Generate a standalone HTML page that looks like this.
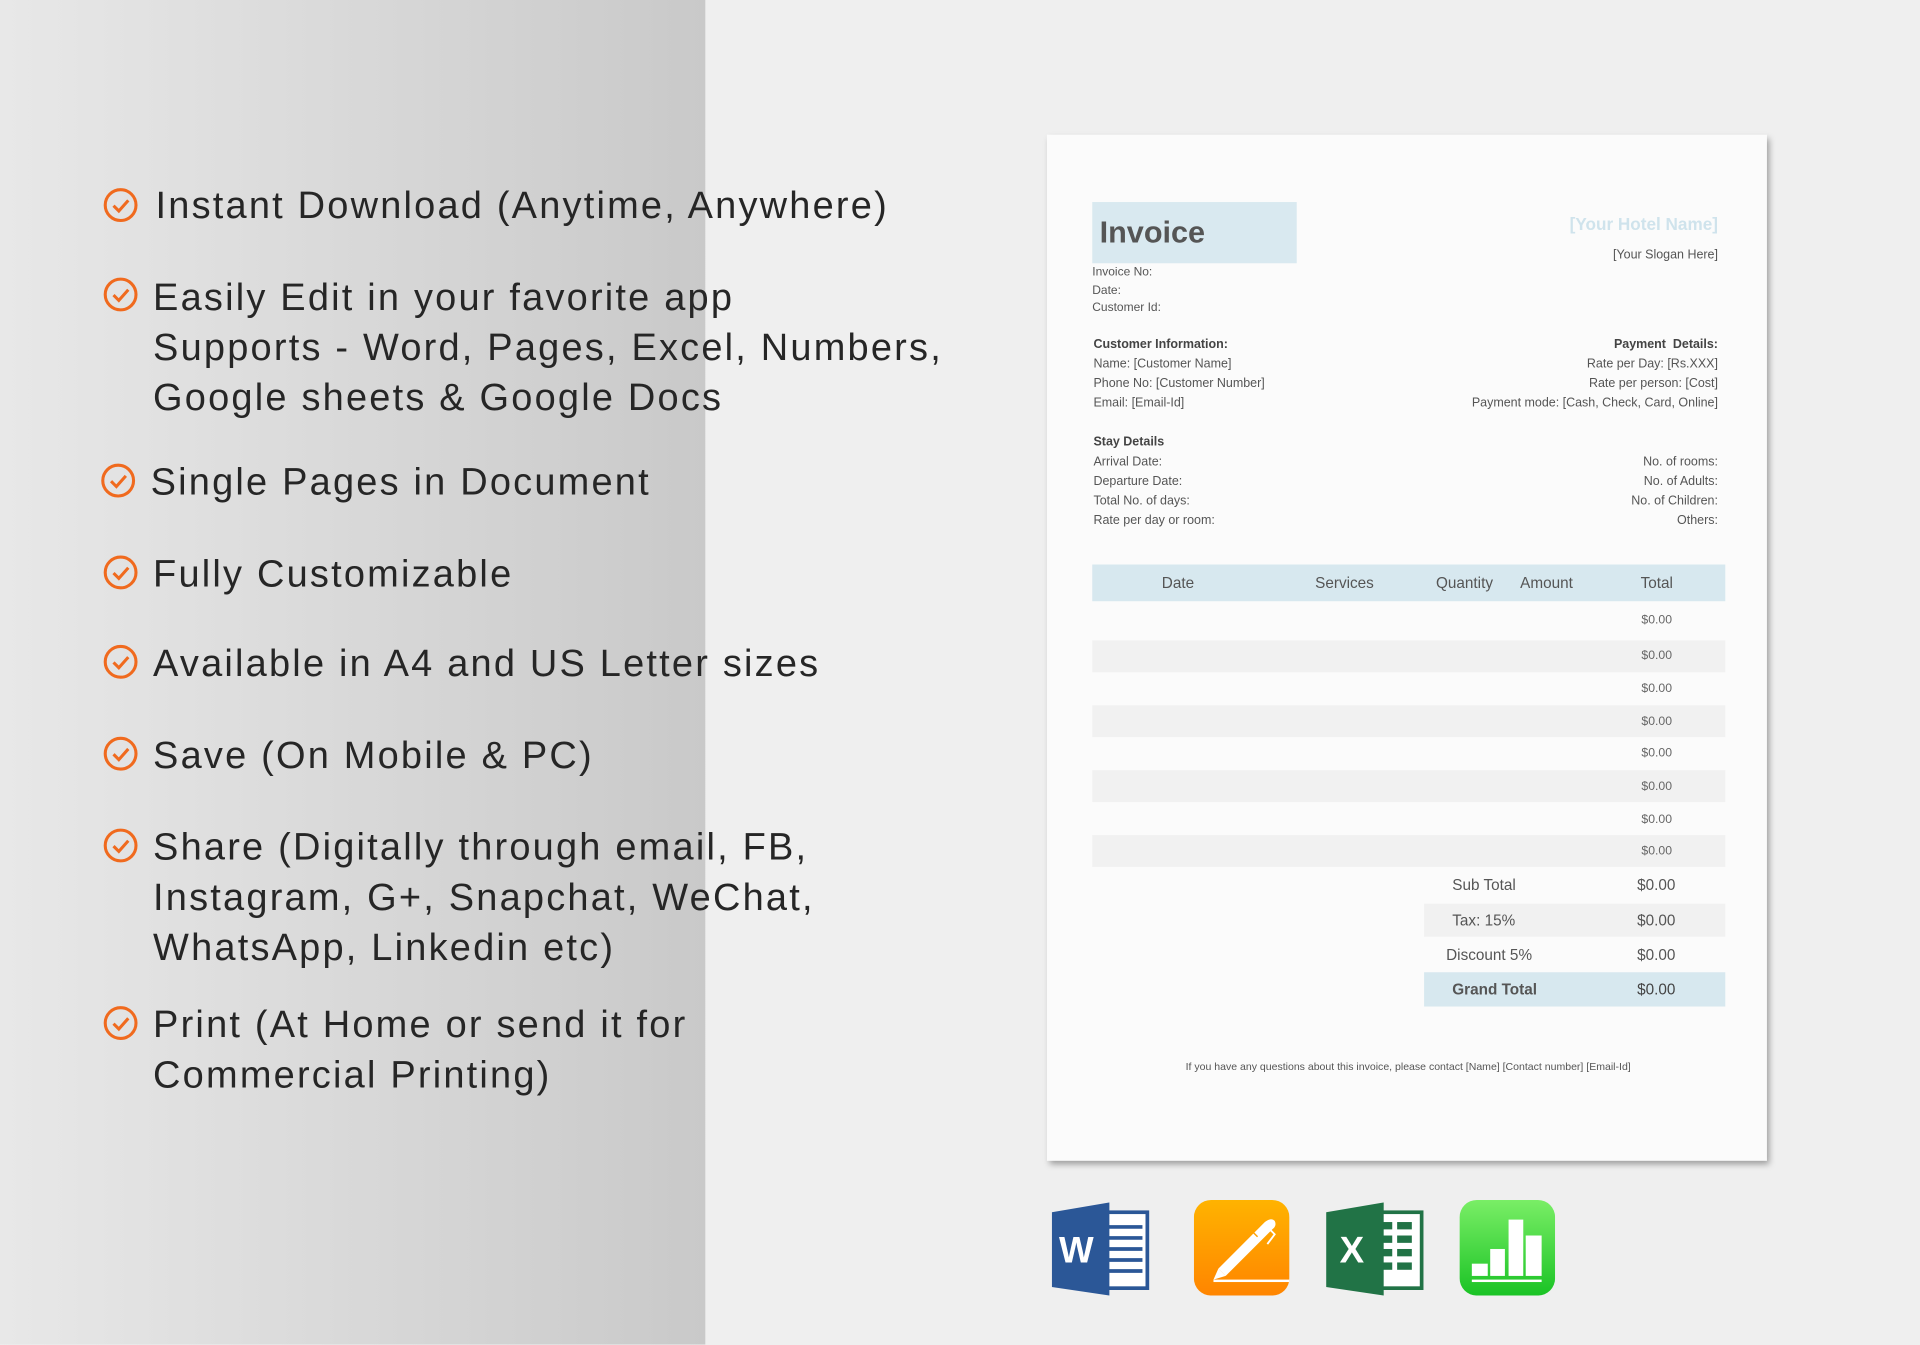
<!DOCTYPE html>
<html><head><meta charset="utf-8"><style>
*{margin:0;padding:0;box-sizing:border-box}
html,body{width:1920px;height:1344px;overflow:hidden;background:#efefef}
#w{position:absolute;left:0;top:0;width:1568px;height:1098px;transform:scale(1.22449);transform-origin:0 0;font-family:"Liberation Sans",sans-serif}
.left{position:absolute;left:0;top:0;width:576px;height:1098px;background:linear-gradient(90deg,#e8e8e8,#c9c9c9)}
.b{position:absolute;left:125px;font-size:31px;color:#262626;letter-spacing:1.8px;line-height:41px;white-space:nowrap}
.ck{position:absolute;left:84px;width:29px;height:29px}
.doc{position:absolute;left:855px;top:110px;width:588px;height:838px;background:#fbfbfb;box-shadow:2px 3px 5px rgba(0,0,0,.35)}
.t{position:absolute;font-size:10.2px;color:#555;line-height:14px;white-space:nowrap}
.r{text-align:right}
.bd{font-weight:bold;color:#444}
.c{position:absolute;font-size:12.5px;color:#555;line-height:14px;transform:translateX(-50%);white-space:nowrap}
.v{position:absolute;font-size:10px;color:#666;left:1353px;transform:translateX(-50%);line-height:12px}
.s{position:absolute;font-size:12.5px;color:#555;line-height:14px;white-space:nowrap}
</style></head><body><div id="w">
<div class="left"></div>

<svg class="ck" style="top:153px" viewBox="0 0 30 30"><circle cx="15" cy="15" r="13" fill="none" stroke="#f06a1e" stroke-width="2.6"/><path d="M9 15.5l4.5 4.5 8-9" fill="none" stroke="#f06a1e" stroke-width="2.6"/></svg>
<div class="b" style="top:147px;left:127px">Instant Download (Anytime, Anywhere)</div>
<svg class="ck" style="top:226px" viewBox="0 0 30 30"><circle cx="15" cy="15" r="13" fill="none" stroke="#f06a1e" stroke-width="2.6"/><path d="M9 15.5l4.5 4.5 8-9" fill="none" stroke="#f06a1e" stroke-width="2.6"/></svg>
<div class="b" style="top:222px">Easily Edit in your favorite app<br>Supports - Word, Pages, Excel, Numbers,<br>Google sheets &amp; Google Docs</div>
<svg class="ck" style="top:378px;left:82px" viewBox="0 0 30 30"><circle cx="15" cy="15" r="13" fill="none" stroke="#f06a1e" stroke-width="2.6"/><path d="M9 15.5l4.5 4.5 8-9" fill="none" stroke="#f06a1e" stroke-width="2.6"/></svg>
<div class="b" style="top:373px;left:123px">Single Pages in Document</div>
<svg class="ck" style="top:453px" viewBox="0 0 30 30"><circle cx="15" cy="15" r="13" fill="none" stroke="#f06a1e" stroke-width="2.6"/><path d="M9 15.5l4.5 4.5 8-9" fill="none" stroke="#f06a1e" stroke-width="2.6"/></svg>
<div class="b" style="top:448px">Fully Customizable</div>
<svg class="ck" style="top:526px" viewBox="0 0 30 30"><circle cx="15" cy="15" r="13" fill="none" stroke="#f06a1e" stroke-width="2.6"/><path d="M9 15.5l4.5 4.5 8-9" fill="none" stroke="#f06a1e" stroke-width="2.6"/></svg>
<div class="b" style="top:521px">Available in A4 and US Letter sizes</div>
<svg class="ck" style="top:601px" viewBox="0 0 30 30"><circle cx="15" cy="15" r="13" fill="none" stroke="#f06a1e" stroke-width="2.6"/><path d="M9 15.5l4.5 4.5 8-9" fill="none" stroke="#f06a1e" stroke-width="2.6"/></svg>
<div class="b" style="top:596px">Save (On Mobile &amp; PC)</div>
<svg class="ck" style="top:676px" viewBox="0 0 30 30"><circle cx="15" cy="15" r="13" fill="none" stroke="#f06a1e" stroke-width="2.6"/><path d="M9 15.5l4.5 4.5 8-9" fill="none" stroke="#f06a1e" stroke-width="2.6"/></svg>
<div class="b" style="top:671px">Share (Digitally through email, FB,<br>Instagram, G+, Snapchat, WeChat,<br>WhatsApp, Linkedin etc)</div>
<svg class="ck" style="top:821px" viewBox="0 0 30 30"><circle cx="15" cy="15" r="13" fill="none" stroke="#f06a1e" stroke-width="2.6"/><path d="M9 15.5l4.5 4.5 8-9" fill="none" stroke="#f06a1e" stroke-width="2.6"/></svg>
<div class="b" style="top:816px">Print (At Home or send it for<br>Commercial Printing)</div>

<div class="doc"></div>
<div style="position:absolute;left:892px;top:165px;width:167px;height:50px;background:#d9e9f0"></div>
<div style="position:absolute;left:898px;top:176px;font-size:25px;font-weight:bold;color:#555">Invoice</div>
<div style="position:absolute;right:165px;top:175px;font-size:14px;font-weight:bold;color:#cfe3ec">[Your Hotel Name]</div>
<div class="t r" style="right:165px;top:202px">[Your Slogan Here]</div>
<div class="t" style="left:892px;top:216px;line-height:14.5px;font-size:9.8px">Invoice No:<br>Date:<br>Customer Id:</div>
<div class="t" style="left:893px;top:274px;line-height:16px"><span class="bd">Customer Information:</span><br>Name: [Customer Name]<br>Phone No: [Customer Number]<br>Email: [Email-Id]</div>
<div class="t r" style="right:165px;top:274px;line-height:16px"><span class="bd">Payment&nbsp; Details:</span><br>Rate per Day: [Rs.XXX]<br>Rate per person: [Cost]<br>Payment mode: [Cash, Check, Card, Online]</div>
<div class="t" style="left:893px;top:354px;line-height:16px"><span class="bd">Stay Details</span><br>Arrival Date:<br>Departure Date:<br>Total No. of days:<br>Rate per day or room:</div>
<div class="t r" style="right:165px;top:370px;line-height:16px">No. of rooms:<br>No. of Adults:<br>No. of Children:<br>Others:</div>

<div style="position:absolute;left:892px;top:461px;width:517px;height:30px;background:#d7e8ef"></div>
<div class="c" style="left:962px;top:469px">Date</div>
<div class="c" style="left:1098px;top:469px">Services</div>
<div class="c" style="left:1196px;top:469px">Quantity</div>
<div class="c" style="left:1263px;top:469px">Amount</div>
<div class="c" style="left:1353px;top:469px">Total</div>
<div style="position:absolute;left:892px;top:523px;width:517px;height:26px;background:#f1f1f1"></div>
<div style="position:absolute;left:892px;top:576px;width:517px;height:26px;background:#f1f1f1"></div>
<div style="position:absolute;left:892px;top:629px;width:517px;height:26px;background:#f1f1f1"></div>
<div style="position:absolute;left:892px;top:682px;width:517px;height:26px;background:#f1f1f1"></div>
<div class="v" style="top:501px">$0.00</div>
<div class="v" style="top:530px">$0.00</div>
<div class="v" style="top:557px">$0.00</div>
<div class="v" style="top:584px">$0.00</div>
<div class="v" style="top:610px">$0.00</div>
<div class="v" style="top:637px">$0.00</div>
<div class="v" style="top:664px">$0.00</div>
<div class="v" style="top:690px">$0.00</div>
<div style="position:absolute;left:1163px;top:738px;width:246px;height:27px;background:#f1f1f1"></div>
<div style="position:absolute;left:1163px;top:794px;width:246px;height:28px;background:#d7e8ef"></div>
<div class="s" style="left:1186px;top:716px">Sub Total</div>
<div class="s" style="left:1186px;top:745px">Tax: 15%</div>
<div class="s" style="left:1181px;top:773px">Discount 5%</div>
<div class="s bd" style="left:1186px;top:801px;color:#555">Grand Total</div>
<div class="s" style="left:1337px;top:716px">$0.00</div>
<div class="s" style="left:1337px;top:745px">$0.00</div>
<div class="s" style="left:1337px;top:773px">$0.00</div>
<div class="s" style="left:1337px;top:801px;color:#444">$0.00</div>
<div class="t" style="left:1150px;top:864px;font-size:8.6px;transform:translateX(-50%)">If you have any questions about this invoice, please contact [Name] [Contact number] [Email-Id]</div>

<svg style="position:absolute;left:859px;top:982px" width="80" height="76" viewBox="0 0 80 76">
<rect x="28" y="8" width="50" height="62" fill="#fff" stroke="#2b5797" stroke-width="3"/>
<g stroke="#2b5797" stroke-width="3"><path d="M40 20h34M40 29h34M40 38h34M40 47h34M40 56h34"/></g>
<path d="M0 8L47 0V76L0 69Z" fill="#2b5797"/>
<text x="20" y="49" font-family="Liberation Sans" font-weight="bold" font-size="30" fill="#fff" text-anchor="middle">W</text></svg>
<svg style="position:absolute;left:975px;top:980px" width="78" height="78" viewBox="0 0 78 78">
<defs><linearGradient id="g1" x1="0" y1="0" x2="0" y2="1"><stop offset="0" stop-color="#ffb300"/><stop offset="1" stop-color="#ff8500"/></linearGradient>
<linearGradient id="g2" x1="0" y1="0" x2="0" y2="1"><stop offset="0" stop-color="#7aee66"/><stop offset="1" stop-color="#1ac325"/></linearGradient></defs>
<rect width="78" height="78" rx="14" fill="url(#g1)"/>
<path d="M20 56L58 18Q63 14 66 17Q68 21 64 24L26 62Z" fill="#fff"/>
<path d="M20 56L26 62L16 65Z" fill="#fff"/>
<path d="M52 30L48 26" stroke="#ffa000" stroke-width="1.2"/>
<path d="M60 22L66 28L60 36" stroke="#fff" stroke-width="1.5" fill="none"/>
<rect x="16" y="65" width="62" height="2" fill="#fff"/></svg>
<svg style="position:absolute;left:1083px;top:982px" width="80" height="76" viewBox="0 0 80 76">
<rect x="28" y="8" width="50" height="62" fill="#fff" stroke="#217346" stroke-width="3"/>
<g fill="#217346"><rect x="42" y="16" width="12" height="6"/><rect x="58" y="16" width="12" height="6"/><rect x="42" y="27" width="12" height="6"/><rect x="58" y="27" width="12" height="6"/><rect x="42" y="38" width="12" height="6"/><rect x="58" y="38" width="12" height="6"/><rect x="42" y="49" width="12" height="6"/><rect x="58" y="49" width="12" height="6"/></g>
<path d="M0 8L47 0V76L0 69Z" fill="#217346"/>
<text x="21" y="49" font-family="Liberation Sans" font-weight="bold" font-size="30" fill="#fff" text-anchor="middle">X</text></svg>
<svg style="position:absolute;left:1192px;top:980px" width="78" height="78" viewBox="0 0 78 78">
<rect width="78" height="78" rx="14" fill="url(#g2)"/>
<g fill="#fff"><rect x="10" y="52" width="13" height="10"/><rect x="25" y="40" width="12" height="22"/><rect x="40" y="16" width="12" height="46"/><rect x="54" y="29" width="13" height="33"/><rect x="10" y="65" width="57" height="2"/></g></svg>
</div></body></html>
